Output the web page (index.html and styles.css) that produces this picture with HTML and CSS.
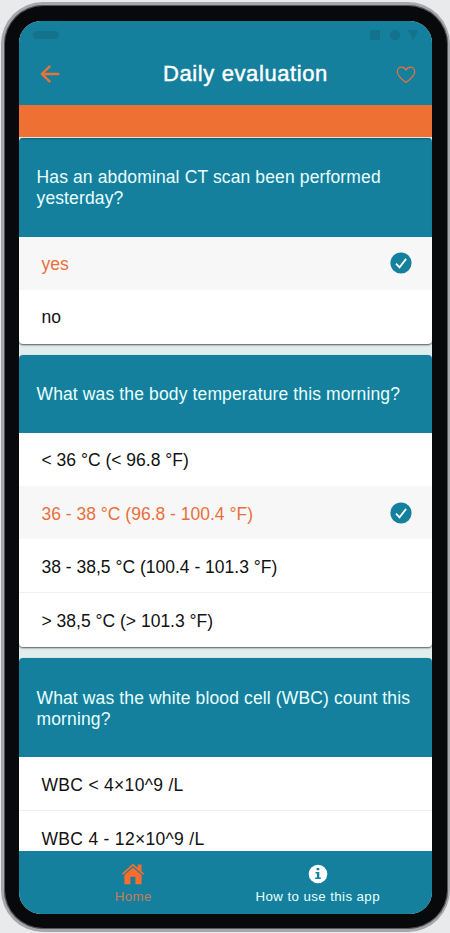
FILE: index.html
```html
<!DOCTYPE html>
<html lang="en">
<head>
<meta charset="utf-8">
<title>Daily evaluation</title>
<link rel="stylesheet" href="styles.css">
</head>
<body>
<div class="phone">
  <div class="screen">
    <div class="status">
      <span class="pill"></span>
      <svg width="50" height="12" viewBox="0 0 50 12"><rect x="1" y="1" width="10" height="10"/><circle cx="26" cy="6" r="5.2"/><path d="M39 1h10.5l-5.2 10z"/></svg>
    </div>
    <header class="topbar">
      <svg class="back" width="20" height="18" viewBox="0 0 20 18"><path d="M18.3 9H2M9.5 1.6L1.8 9l7.7 7.4"/></svg>
      <h1>Daily evaluation</h1>
      <svg class="heart" width="20" height="18" viewBox="0 0 20 18"><path d="M10 16.4C7.5 14.6 1.3 10 1.3 5.7C1.3 3 3.2 1.1 5.5 1.1C7.4 1.1 9 2.1 10 4C11 2.1 12.6 1.1 14.5 1.1C16.8 1.1 18.7 3 18.7 5.7C18.7 10 12.5 14.6 10 16.4Z"/></svg>
    </header>
    <div class="banner"></div>
    <main class="content">
      <section class="card first">
        <h2 class="tall">Has an abdominal CT scan been performed<br>yesterday?</h2>
        <div class="row selected"><span>yes</span>
          <svg class="check" width="22" height="22" viewBox="0 0 22 22"><circle cx="11" cy="11" r="10.6"/><path d="M6 11.6l3.5 3.7 6.6-8.4"/></svg></div>
        <div class="row"><span>no</span></div>
      </section>
      <section class="card temperature">
        <h2>What was the body temperature this morning?</h2>
        <div class="row"><span>&lt; 36 °C (&lt; 96.8 °F)</span></div>
        <div class="row low selected"><span>36 - 38 °C (96.8 - 100.4 °F)</span>
          <svg class="check" width="22" height="22" viewBox="0 0 22 22"><circle cx="11" cy="11" r="10.6"/><path d="M6 11.6l3.5 3.7 6.6-8.4"/></svg></div>
        <div class="row low"><span>38 - 38,5 °C (100.4 - 101.3 °F)</span></div>
        <div class="row low line last"><span>&gt; 38,5 °C (&gt; 101.3 °F)</span></div>
      </section>
      <section class="card blood">
        <h2 class="tall">What was the white blood cell (WBC) count this<br>morning?</h2>
        <div class="row low"><span>WBC &lt; 4×10^9 /L</span></div>
        <div class="row low line"><span>WBC 4 - 12×10^9 /L</span></div>
      </section>
    </main>
    <nav class="tabs">
      <div class="tab active">
        <svg width="24" height="22" viewBox="0 0 24 22"><path d="M12 .8L.9 10.6l1.1 1.2L12 3.1l10 8.7 1.1-1.2L20.5 8.3V1.5h-3.7V5zM12 4.4L3.4 12v9.2h6v-7.4h5v7.4h6.2V12z"/></svg>
        <span>Home</span>
      </div>
      <div class="tab">
        <svg width="24" height="22" viewBox="0 0 24 22"><circle cx="12" cy="11" r="9.3"/><path class="glyph" d="M10.6 5h2.7v2.3h-2.7zM9.5 9h3.8v5.4h1.5v1.5H9.2v-1.5h1.7v-3.9H9.5z"/></svg>
        <span>How to use this app</span>
      </div>
    </nav>
  </div>
</div>
</body>
</html>
```

FILE: styles.css
```css
* { box-sizing: border-box; }
body {
  margin: 0;
  width: 450px;
  height: 933px;
  overflow: hidden;
  padding: 2px 0 0 1px;
  background: #e9eaec;
  font-family: "Liberation Sans", Arial, sans-serif;
}
.phone {
  width: 449px;
  height: 930px;
  padding: 16px 15px 15px 15px;
  border: 3px solid #a5a7aa;
  border-right-width: 2px;
  border-radius: 42px;
  background: #08090a;
  box-shadow: inset 0 0 0 1px #55575a;
}
.screen {
  width: 413px;
  height: 893px;
  border-radius: 22px;
  overflow: hidden;
  background: #e2eeee;
  display: flex;
  flex-direction: column;
}
.status {
  height: 28px;
  flex: none;
  background: #14809d;
  display: flex;
  align-items: center;
  justify-content: space-between;
  padding: 0 13px 0 14px;
}
.pill { width: 26px; height: 8px; border-radius: 4px; background: #15728d; }
.status svg { fill: #15728d; }
.topbar {
  height: 56px;
  flex: none;
  background: #14809d;
  display: flex;
  align-items: center;
  justify-content: space-between;
  padding: 0 16px 6px 21px;
}
.back, .heart { fill: none; stroke: #ec7038; }
.heart { margin-top: 2px; stroke-width: 1.2; }
.back { stroke-width: 2.4; stroke-linecap: round; stroke-linejoin: round; }
h1 {
  margin: 0 0 0 35px;
  color: #fff;
  font-size: 22px;
  font-weight: 400;
  letter-spacing: .6px;
  line-height: 26px;
  white-space: nowrap;
  -webkit-text-stroke: .45px #fff;
}
.banner { height: 32px; flex: none; background: #ee7033; }
.content { flex: 1; min-height: 0; overflow: hidden; padding-top: 1px; }
.card {
  margin-bottom: 11px;
  border-radius: 4px;
  overflow: hidden;
  background: #fff;
  box-shadow: 0 1px 2px rgba(0, 0, 0, .65);
}
h2 {
  margin: 0;
  height: 78px;
  padding: 29px 0 0 17.5px;
  background: #14809d;
  color: #e8ffff;
  font-size: 17.5px;
  font-weight: 400;
  letter-spacing: .13px;
  line-height: 21px;
  white-space: nowrap;
}
.tall { height: 99px; }
.blood h2 { padding-top: 30px; }
.first h2 { box-shadow: inset 0 2px 2px -1px #0b5e78; }
.row {
  height: 53px;
  padding: 1px 20px 0 22.5px;
  display: flex;
  align-items: center;
  justify-content: space-between;
  color: #111;
  font-size: 17.5px;
  white-space: nowrap;
}
.low { padding-top: 3px; }
.row:last-child { height: 54px; }
.selected { background: #f7f7f7; color: #e96f3c; }
.line { border-top: 1px solid #efefef; }
.last.row { height: 55px; }
.blood .row { letter-spacing: .3px; }
.check circle { fill: #14809d; }
.check path { fill: none; stroke: #fff; stroke-width: 1.8; }
.check { margin-top: -3px; }
.tabs {
  height: 63px;
  flex: none;
  background: #14809d;
  display: flex;
  padding: 0 22px;
}
.tab {
  flex: 1;
  display: flex;
  flex-direction: column;
  align-items: center;
  padding-top: 12px;
  color: #e8ffff;
  font-size: 13.3px;
  letter-spacing: .4px;
  line-height: 16px;
  white-space: nowrap;
}
.tab svg { fill: #fff; margin-bottom: 4px; }
.tab .glyph { fill: #14809d; }
.active { color: #c97b59; }
.active svg { fill: #fb6d2d; }
```
